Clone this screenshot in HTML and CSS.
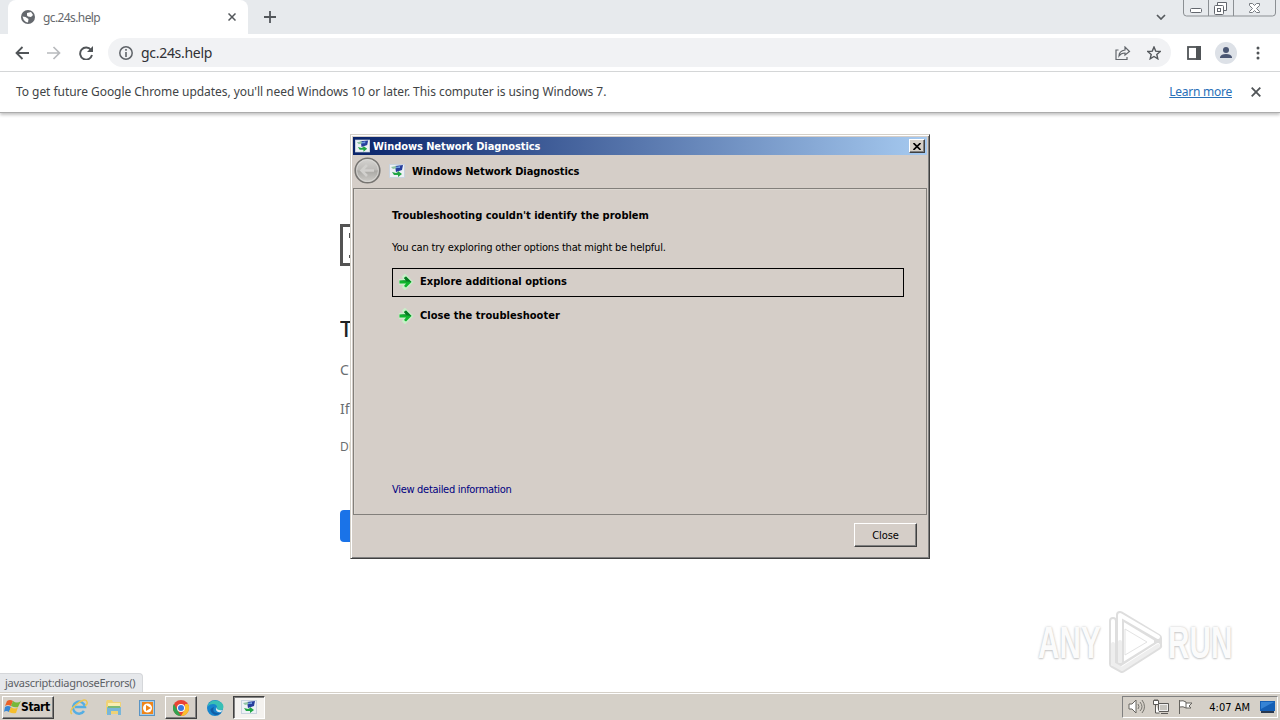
FILE: index.html
```html
<!DOCTYPE html>
<html lang="en">
<head>
    <meta charset="UTF-8">
    <meta name="viewport" content="width=device-width, initial-scale=1.0">
    <title>gc.24s.help</title>
    <link rel="stylesheet" href="styles.css">
</head>
<body>
    <svg class="defs" width="0" height="0">
        <symbol id="network-icon" viewBox="0 0 16 14">
            <rect x=".5" y=".5" width="15" height="13" fill="#edf1f5" stroke="#c9d3df"/>
            <path d="M6 2l8-1-1 5-6 2z" fill="#263d9c"/>
            <path d="M2 3l5-1 1 2-4 1z" fill="#8fc4a4"/>
            <path d="M7 3l4-1v2H7z" fill="#6f9ce0"/>
            <path d="M3 8l4 1 2-1V7l4 3-4 3v-2H5z" fill="#20a544"/>
        </symbol>
        <symbol id="green-arrow" viewBox="0 0 16 16">
            <path d="M2 6h5L5 3l2-2 7 7-7 7-2-2 2-3H2z" fill="#c5efc5" stroke="#c8efc8" stroke-width="2"/>
            <path d="M1.500 6.500H8L6 4l2-1.500L13.500 8 8 13.500 6 12l2-2.500H1.500z" fill="#10b52e"/>
            <path d="M1.500 6.500H8L6 4l2-1.500L13.500 8z" fill="#087a24"/>
        </symbol>
    </svg>

    <div class="tab-strip">
        <div class="tab">
            <svg width="14" height="14" viewBox="0 0 14 14"><circle cx="7" cy="7" r="7" fill="#65696e"/><path d="M1.500 6.500l3 .5 3 2-.5 3.500-2-.5Q2 10 1.500 6.500zM6 3l4-1 2 3-2 2-3-.5-1-1z" fill="#fff"/></svg>
            <span class="tab-title">gc.24s.help</span>
            <svg class="tab-close" width="8" height="8" viewBox="0 0 8 8"><path d="M.5.5l7 7M7.500.5l-7 7" stroke="#53575b" stroke-width="1.5"/></svg>
        </div>
        <svg class="new-tab" width="12" height="12" viewBox="0 0 12 12"><path d="M6 0v12M0 6h12" stroke="#53575b" stroke-width="1.8"/></svg>
        <svg class="tab-search" width="10" height="6" viewBox="0 0 10 6"><path d="M1 1l4 4 4-4" fill="none" stroke="#565a5e" stroke-width="1.7"/></svg>
        <svg class="window-buttons" width="94" height="18" viewBox="0 0 94 18">
            <path d="M.5 0v13q0 3 3 3h86q3 0 3-3V0M25.500 0v16M50.500 0v16" fill="none" stroke="#8b8f93"/>
            <rect x="7.500" y="8.500" width="11" height="4" rx="1" fill="#fff" stroke="#63676e"/>
            <path d="M34.500 5.500v-3h9v8h-3" fill="#fff" stroke="#63676e"/>
            <rect x="31.500" y="5.500" width="9" height="9" rx="1" fill="#fff" stroke="#63676e"/>
            <rect x="34.500" y="8.500" width="3" height="3" fill="#fff" stroke="#63676e"/>
            <path d="M66.500 3.500h3l2 2 2-2h3v2l-3 3 3 3v1h-3l-2-2-2 2h-3v-1l3-3-3-3z" fill="#fff" stroke="#777b81"/>
        </svg>
    </div>

    <div class="toolbar">
        <svg width="14" height="14" viewBox="0 0 14 14"><path d="M14 7H2M7.500 1l-6 6 6 6" fill="none" stroke="#515558" stroke-width="1.8"/></svg>
        <svg class="forward" width="14" height="14" viewBox="0 0 14 14"><path d="M0 7h12M6.500 1l6 6-6 6" fill="none" stroke="#b8babd" stroke-width="1.7"/></svg>
        <svg class="reload" width="14" height="14" viewBox="0 0 14 14"><path d="M12 4A6 6 0 1 0 13 9" fill="none" stroke="#515558" stroke-width="1.9"/><path d="M14 0v6H8z" fill="#515558"/></svg>
        <div class="address">
            <svg width="14" height="14" viewBox="0 0 14 14"><circle cx="7" cy="7" r="6.200" fill="none" stroke="#5f6368" stroke-width="1.500"/><path d="M7 6v5M7 3v1.800" stroke="#5f6368" stroke-width="1.600"/></svg>
            <span class="url">gc.24s.help</span>
            <svg class="share" width="16" height="14" viewBox="0 0 16 14"><path d="M3.500 4H1v9.500h11V11M4 10q0-5 6-6V1l4.500 4.500L10 9V7q-4 0-6 3z" fill="none" stroke="#62666b" stroke-width="1.200"/></svg>
            <svg width="14" height="14" viewBox="0 0 14 14"><path d="M7 1l1.700 4.100 4.500.4-3.400 2.900 1 4.400L7 10.500l-3.800 2.300 1-4.400L.8 5.500l4.500-.4z" fill="none" stroke="#53575b" stroke-width="1.400"/></svg>
        </div>
        <svg class="side-panel" width="14" height="14" viewBox="0 0 14 14"><rect x="1" y="1" width="12" height="12" fill="#fff" stroke="#505457" stroke-width="1.800"/><path d="M9 0h5v14H9z" fill="#505457"/></svg>
        <svg class="profile" width="22" height="22" viewBox="0 0 22 22"><circle cx="11" cy="11" r="11" fill="#dde1e7"/><circle cx="11" cy="8" r="3" fill="#4a5673"/><path d="M5 16v-1q1-3 6-3t6 3v1z" fill="#4a5673"/></svg>
        <svg class="menu" width="4" height="14" viewBox="0 0 4 14"><circle cx="2" cy="2" r="1.500"/><circle cx="2" cy="7" r="1.500"/><circle cx="2" cy="12" r="1.500"/></svg>
    </div>

    <div class="infobar">
        <span class="infobar-text">To get future Google Chrome updates, you'll need Windows 10 or later. This computer is using Windows 7.</span>
        <a class="learn-more">Learn more</a>
        <svg width="10" height="10" viewBox="0 0 10 10"><path d="M.7.7l8.600 8.600M9.300.7L.7 9.300" stroke="#505457" stroke-width="1.800"/></svg>
    </div>

    <div class="page">
        <div class="error">
            <svg class="error-icon" width="38" height="42" viewBox="0 0 38 42"><path d="M1.500 1.500h35v39h-35z" fill="#fff" stroke="#535353" stroke-width="3"/><path d="M9 9h3v5H9zM9 31h3v3H9z" fill="#535353"/></svg>
            <h1>T</h1>
            <p>C</p>
            <p>If</p>
            <p class="code">DN</p>
            <div class="reload-button"></div>
        </div>
        <div class="watermark">
            <span>ANY</span>
            <svg width="58" height="64" viewBox="0 0 58 64">
                <g fill="none" stroke-linejoin="round" stroke-linecap="round">
                    <path d="M7 11v43l9 5 36-23M14 51V5l38 23v7L15 58" stroke="#dedede" stroke-width="8"/>
                    <path d="M7 11v43M14 51V5l38 22M20 19v27l24-15M16 58l36-23" stroke="#fff" stroke-width="4"/>
                    <path d="M14 32v19M7 34v20l9 5 36-23" stroke="#eee" stroke-width="4"/>
                </g>
                <path d="M19 19v26l22-13z" fill="#fff" stroke="#e3e3e3"/>
            </svg>
            <span class="run">RUN</span>
        </div>
        <div class="status">javascript:diagnoseErrors()</div>
    </div>

    <div class="taskbar">
        <div class="start">
            <svg width="17" height="16" viewBox="0 0 17 16"><path d="M3 2q3-2 6 0L7 7Q4 5 1 7z" fill="#e9622a"/><path d="M9 2q4 3 8 0l-3 6q-3 1-7-1z" fill="#76b83a"/><path d="M1 8q3-2 6 0l-2 5q-3-2-5 0z" fill="#3787d5"/><path d="M7 8q4 3 7 0l-2 6q-3 1-7-1z" fill="#f5be2d"/></svg>
            <span>Start</span>
        </div>
        <div class="task first">
            <svg width="18" height="17" viewBox="0 0 18 17"><path d="M14 12a6 6 0 1 1 1-4H5" fill="none" stroke="#55aee3" stroke-width="2.500"/><path d="M2 15Q-2 12 7 5t10-2q1 2-2 4" fill="none" stroke="#ecc653" stroke-width="1.500"/></svg>
        </div>
        <div class="task">
            <svg width="17" height="17" viewBox="0 0 17 17"><path d="M1 3l1-2h5l1 2h8v12H1z" fill="#efd276"/><path d="M3 4h12v4H3z" fill="#f9edb1"/><path d="M2 8h14v8h-3v-4H6v4H2z" fill="#78b6d9"/><path d="M3 7h12v2H3z" fill="#7dba75"/></svg>
        </div>
        <div class="task">
            <svg width="16" height="16" viewBox="0 0 16 16"><rect x=".5" y=".5" width="15" height="15" fill="#a8cce7" stroke="#5a94c4"/><path d="M3 2h11v12H3z" fill="#ee851b"/><circle cx="8.500" cy="8" r="4.500" fill="#fff"/><path d="M7 5l5 3-5 3z" fill="#ee851b"/></svg>
        </div>
        <div class="task raised">
            <svg width="16" height="16" viewBox="0 0 16 16"><circle cx="8" cy="8" r="8" fill="#e94335"/><path d="M1 4l4 7 3 5a8 8 0 0 1-7-12z" fill="#32a350"/><path d="M8 16l4-7V4h3a8 8 0 0 1-7 12z" fill="#fbc02c"/><circle cx="8" cy="8" r="4" fill="#fff"/><circle cx="8" cy="8" r="3" fill="#3978df"/></svg>
        </div>
        <div class="task edge">
            <svg width="17" height="16" viewBox="0 0 17 16"><circle cx="8" cy="8" r="8" fill="#1685cd"/><path d="M1 5Q4-1 11 1t5 8q-2 2-6 1 1-6-4-6Q3 4 1 6z" fill="#38bfb5"/><path d="M7 7q-3 7 7 6-5 4-9 0T7 7z" fill="#125da5"/><path d="M9 7q1 4 7 3l-2 2Q8 13 9 7z" fill="#e4eef0"/></svg>
        </div>
        <div class="task pressed"><svg width="16" height="14"><use href="#network-icon"/></svg></div>
        <div class="tray">
            <svg width="18" height="16" viewBox="0 0 18 16"><path d="M1 5h3l4-4v13l-4-4H1z" fill="#fff" stroke="#66645f"/><path d="M10 5q2 3 0 5M12 3q4 5 0 9M14 1q5 7 0 13" fill="none" stroke="#77756f"/></svg>
            <svg width="17" height="16" viewBox="0 0 17 16"><path d="M5.500 4.500h10v8h-10zM8 14.500h7" fill="#eee" stroke="#5c5a57"/><path d="M7 6h7v5H7z" fill="#c6c4be"/><path d="M.5 1.500h5v4h-5zM2 0v2M4 0v2M2.500 5v9h4" fill="#fff" stroke="#5c5a57"/></svg>
            <svg width="17" height="16" viewBox="0 0 17 16"><path d="M2.500 15V1M3 2q3-1 6 1v6q-3-2-6-1M9 4h6l-3 3 2 2H9" fill="#fff" stroke="#66645f"/></svg>
            <span class="clock">4:07 AM</span>
            <svg width="15" height="14" viewBox="0 0 15 14"><path d="M0 1h15v10H0z" fill="#155fb5"/><path d="M1 2h13L1 9z" fill="#3583d5"/><path d="M1 11h13v2H1z" fill="#29384f"/></svg>
        </div>
    </div>

    <div class="dialog">
        <div class="title-bar">
            <svg width="15" height="14" viewBox="0 0 16 14"><use href="#network-icon"/></svg>
            <span>Windows Network Diagnostics</span>
            <div class="close-box"><svg width="8" height="7" viewBox="0 0 8 7"><path d="M.5 0l7 7M7.500 0l-7 7" stroke="#000" stroke-width="1.600"/></svg></div>
        </div>
        <div class="dialog-header">
            <svg class="back" width="27" height="27" viewBox="0 0 27 27">
                <defs><linearGradient id="back-fill" x1="0" y1="0" x2="0" y2="1"><stop stop-color="#d6d5d2"/><stop offset=".48" stop-color="#bcbab7"/><stop offset=".52" stop-color="#aaa9a5"/><stop offset="1" stop-color="#d0ceca"/></linearGradient></defs>
                <circle cx="13.500" cy="13.500" r="12.300" fill="url(#back-fill)" stroke="#777572" stroke-width="1.600"/><circle cx="13.500" cy="13.500" r="10.900" fill="none" stroke="#dddcd9" stroke-width=".8"/><path d="M20 13.500H8M13 8l-5.500 5.500L13 19" fill="none" stroke="#d1d0cd" stroke-width="2.500"/>
            </svg>
            <svg width="16" height="14"><use href="#network-icon"/></svg>
            <span>Windows Network Diagnostics</span>
        </div>
        <div class="dialog-body">
            <h2>Troubleshooting couldn't identify the problem</h2>
            <p>You can try exploring other options that might be helpful.</p>
            <div class="option focused"><svg width="16" height="16"><use href="#green-arrow"/></svg><span>Explore additional options</span></div>
            <div class="option"><svg width="16" height="16"><use href="#green-arrow"/></svg><span class="close-option">Close the troubleshooter</span></div>
            <a class="details">View detailed information</a>
        </div>
        <div class="dialog-footer"><button>Close</button></div>
    </div>
</body>
</html>
```
FILE: styles.css
```css
* {
    box-sizing: border-box;
}
body {
    margin: 0;
    width: 1280px;
    height: 720px;
    overflow: hidden;
    display: flex;
    flex-direction: column;
    background: #fff;
    font-family: "DejaVu Sans Condensed", "DejaVu Sans", sans-serif;
    font-size: 11px;
    color: #000;
}
svg {
    display: block;
    flex: none;
}
.defs {
    position: absolute;
}
span, a, p, h1, h2 {
    white-space: nowrap;
}
.tab-strip {
    height: 34px;
    flex: none;
    display: flex;
    background: #e7eaed;
    padding-left: 8px;
}
.tab {
    width: 240px;
    height: 34px;
    background: #fff;
    border-radius: 8px 8px 0 0;
    display: flex;
    align-items: center;
    padding: 0 12px 0 13px;
}
.tab-title {
    font-family: "Noto Sans", sans-serif;
    font-size: 12px;
    letter-spacing: -0.6px;
    margin-left: 8px;
    color: #66696d;
}
.tab-close {
    margin-left: auto;
}
.new-tab {
    margin: 11px 0 0 16px;
}
.tab-search {
    margin: 14px 17px 0 auto;
}
.window-buttons {
    margin-right: 3px;
}
.toolbar {
    height: 38px;
    flex: none;
    display: flex;
    align-items: center;
    padding: 0 20px 0 15px;
    border-bottom: 1px solid #d5d7d9;
}
.forward {
    margin-left: 18px;
}
.reload {
    margin-left: 18px;
}
.address {
    width: 1063px;
    height: 29px;
    margin-left: 15px;
    padding: 0 10px 0 11px;
    border-radius: 15px;
    background: #f1f2f4;
    display: flex;
    align-items: center;
}
.url {
    font-family: "Noto Sans", sans-serif;
    font-size: 14px;
    letter-spacing: -0.3px;
    margin-left: 8px;
    color: #303134;
}
.share {
    margin: 0 16px 0 auto;
}
.side-panel {
    margin-left: 16px;
}
.profile {
    margin-left: 14px;
}
.menu {
    margin-left: auto;
    fill: #505457;
}
.infobar {
    height: 41px;
    flex: none;
    display: flex;
    align-items: center;
    padding: 0 19px 1px 16px;
    border-bottom: 1px solid #acacac;
    box-shadow: 0 2px 3px #c4c4c4;
    font-family: "Noto Sans", sans-serif;
    font-size: 12px;
    color: #414446;
}
.infobar-text {
    letter-spacing: -0.05px;
}
.learn-more {
    margin: 0 19px 0 auto;
    letter-spacing: -0.25px;
    color: #2870b8;
    text-decoration: underline;
}
.page {
    flex: 1;
    display: flex;
    flex-direction: column;
    position: relative;
}
.error {
    width: 10px;
    margin: 111px 0 0 340px;
    overflow: hidden;
    font-family: "Noto Sans", sans-serif;
    color: #6a6e72;
}
.error h1 {
    font-size: 22px;
    line-height: 30px;
    font-weight: 500;
    color: #202124;
    margin: 47px 0 0;
}
.error p {
    font-size: 14px;
    line-height: 20px;
    margin: 17px 0 19px;
}
.error p + p {
    margin-top: 0;
}
.error .code {
    font-size: 12px;
    margin: -1px 0 0;
}
.reload-button {
    width: 72px;
    height: 32px;
    margin-top: 53px;
    border-radius: 4px;
    background: #1a73e8;
}
.watermark {
    position: absolute;
    left: 1038px;
    top: 495px;
    display: flex;
    align-items: center;
    font: bold 45px/64px "Liberation Sans", sans-serif;
    color: #fbfbfb;
    text-shadow: 0 0 3px #c4c4c4, 0 1px 2px #d0d0d0;
}
.watermark span {
    width: 68px;
    padding-top: 3px;
    transform: scaleX(.66);
    transform-origin: left;
}
.watermark .run {
    margin-left: 4px;
}
.status {
    width: 143px;
    height: 19px;
    margin-top: auto;
    padding: 0 5px;
    border-top: 1px solid #d5d7da;
    border-right: 1px solid #d5d7da;
    border-radius: 0 4px 0 0;
    background: #e6e8eb;
    color: #5c6065;
    font: 11px/18px "Noto Sans", sans-serif;
    letter-spacing: -0.28px;
}
.taskbar {
    height: 28px;
    flex: none;
    display: flex;
    align-items: flex-start;
    border-top: 1px solid #d5d0c8;
    box-shadow: inset 0 1px #fff;
    background: #d5d0c8;
    padding: 3px 2px 0 2px;
}
.start {
    width: 52px;
    height: 23px;
    display: flex;
    align-items: center;
    padding: 0 0 2px 1px;
    font-weight: bold;
    font-size: 12px;
    letter-spacing: -0.4px;
    background: #d5d0c8;
    border: 1px solid;
    border-color: #fff #404040 #404040 #fff;
    box-shadow: inset -1px -1px #808080;
}
.task {
    width: 32px;
    height: 23px;
    margin-right: 2px;
    display: flex;
    align-items: center;
    justify-content: center;
}
.first {
    margin-left: 9px;
}
.raised, .pressed {
    border: 1px solid;
    border-color: #fff #404040 #404040 #fff;
    box-shadow: inset -1px -1px #808080;
}
.pressed {
    padding-bottom: 2px;
    border-color: #404040 #fff #fff #404040;
    box-shadow: inset 1px 1px #808080;
    background: #f4f2ef;
}
.tray {
    width: 156px;
    height: 22px;
    margin-left: auto;
    padding: 0 2px 0 5px;
    display: flex;
    align-items: center;
    gap: 7px;
    border: 1px solid;
    border-color: #808080 #fff #fff #808080;
}
.clock {
    margin-left: auto;
    margin-right: 3px;
}
.dialog {
    position: absolute;
    left: 350px;
    top: 134px;
    width: 580px;
    height: 425px;
    display: flex;
    flex-direction: column;
    padding: 1px;
    background: #d5cec8;
    border: 1px solid;
    border-color: #d4d0c8 #404040 #404040 #d4d0c8;
    box-shadow: inset 1px 1px #fff, inset -1px -1px #808080;
}
.title-bar {
    height: 18px;
    flex: none;
    display: flex;
    align-items: center;
    margin: 1px;
    padding: 0 2px;
    background: linear-gradient(90deg, #0a246a, #a6caf0);
    color: #fff;
    font-weight: bold;
    letter-spacing: -0.07px;
}
.title-bar span {
    margin-left: 3px;
}
.close-box {
    width: 16px;
    height: 14px;
    margin-left: auto;
    display: flex;
    align-items: center;
    justify-content: center;
    background: #d5d0c8;
    border: 1px solid;
    border-color: #fff #404040 #404040 #fff;
    box-shadow: inset -1px -1px #808080;
}
.dialog-header {
    height: 32px;
    flex: none;
    display: flex;
    align-items: center;
    padding: 0 0 2px 2px;
    font-weight: bold;
    letter-spacing: -0.07px;
}
.back {
    margin: -2px 8px 0 0;
}
.dialog-header span {
    margin-left: 7px;
}
.dialog-body {
    height: 327px;
    flex: none;
    margin: 0 1px;
    padding: 20px 22px 0 38px;
    border: 1px solid #827f7b;
    box-shadow: inset 1px 1px #ddd8d2;
    display: flex;
    flex-direction: column;
}
.dialog-body h2 {
    margin: 0;
    font-size: 11px;
    line-height: 14px;
}
.dialog-body p {
    margin: 18px 0 13px;
    line-height: 14px;
    letter-spacing: -0.18px;
}
.option {
    height: 29px;
    margin-bottom: 5px;
    padding: 0 0 2px 7px;
    border: 1px solid transparent;
    display: flex;
    align-items: center;
    font-weight: bold;
}
.option svg {
    margin: 1px 6px 0 -2px;
}
.close-option {
    letter-spacing: 0.04px;
}
.focused {
    border-color: #000;
}
.details {
    margin-top: 147px;
    line-height: 14px;
    letter-spacing: -0.3px;
    color: #000080;
}
.dialog-footer {
    display: flex;
    justify-content: flex-end;
    padding: 8px 11px 0 0;
}
button {
    width: 63px;
    height: 24px;
    padding: 0;
    font: inherit;
    letter-spacing: -0.1px;
    background: #d5cec8;
    border: 1px solid;
    border-color: #fff #404040 #404040 #fff;
    box-shadow: inset -1px -1px #808080;
}
```
